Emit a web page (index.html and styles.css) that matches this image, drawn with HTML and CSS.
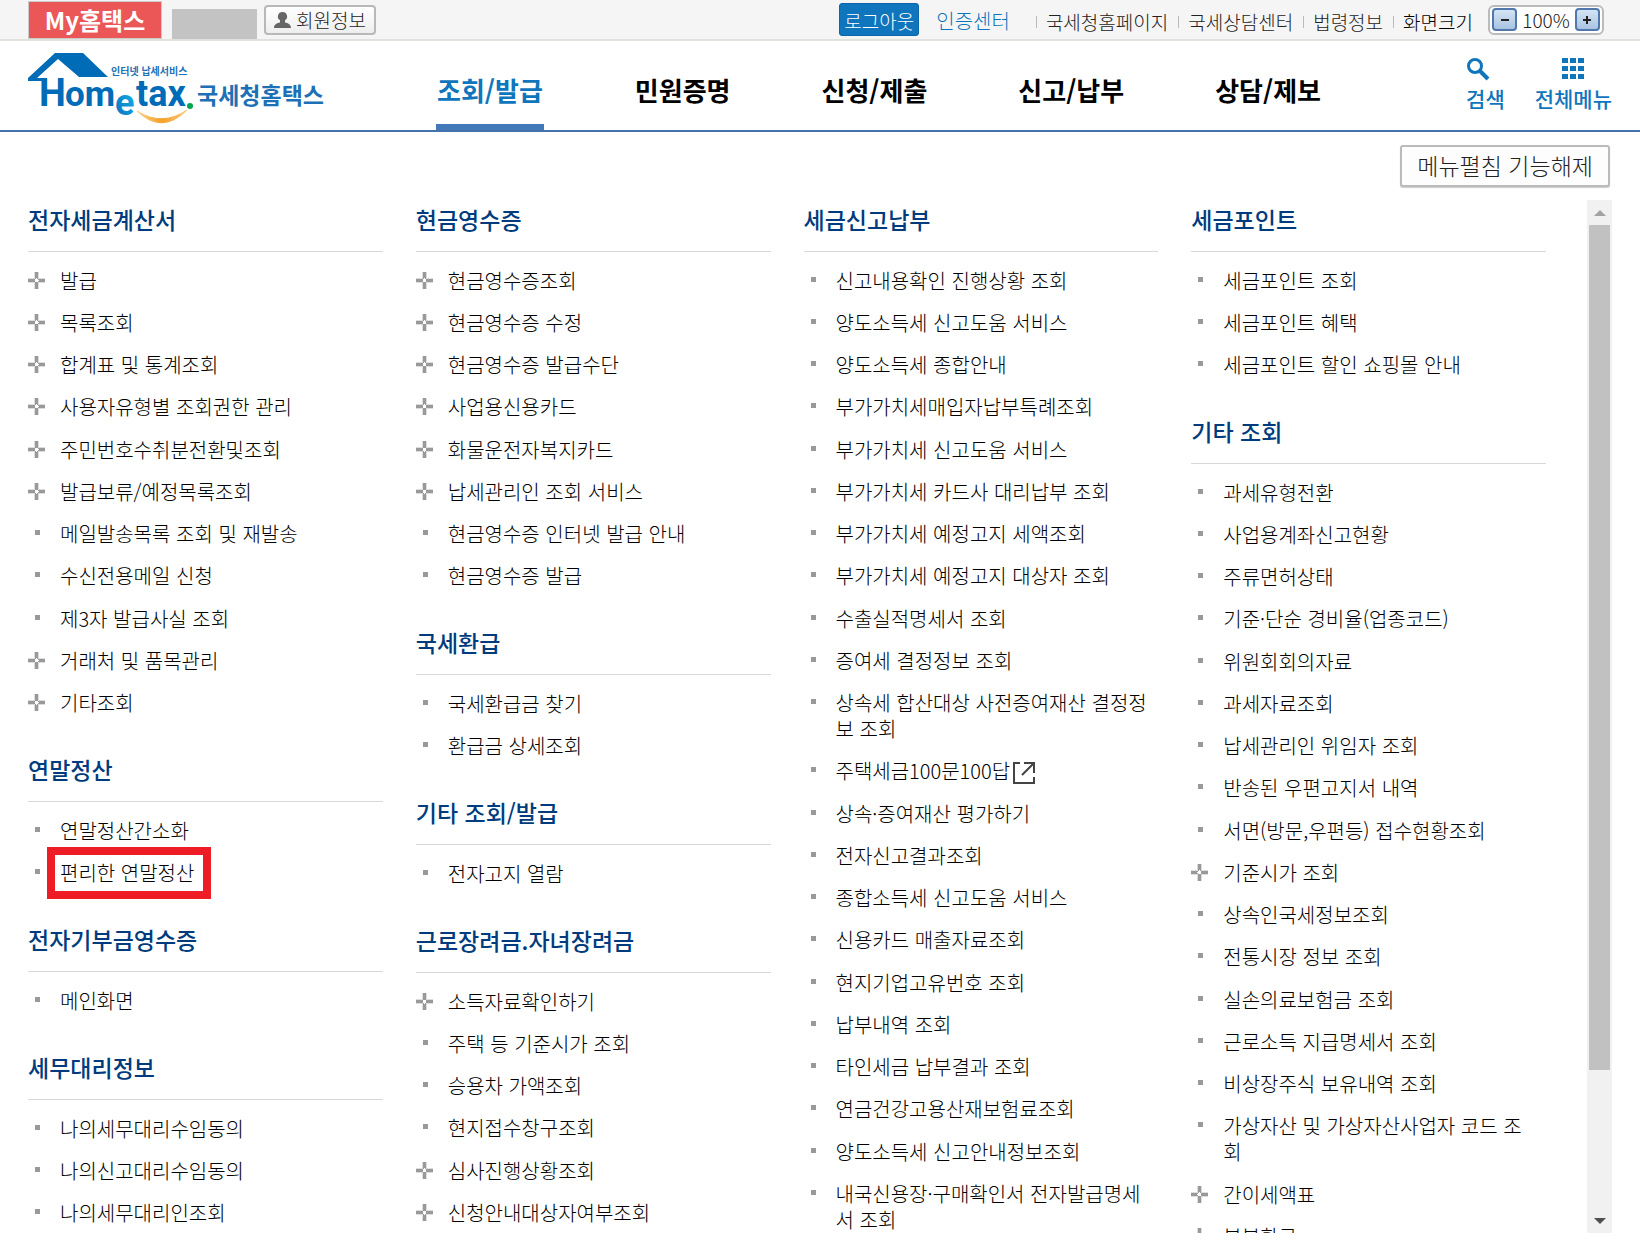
FILE: index.html
```html
<!DOCTYPE html>
<html lang="ko">
  <head>
    <meta charset="utf-8">
    <title>국세청 홈택스</title>
    <link rel="stylesheet" href="styles.css">
  </head>
  <body>
    <div class="topbar">
      <a href="#" class="my-tab">My홈택스</a>
      <span class="user-name"></span>
      <button type="button" class="btn-member">
        <svg width="17" height="18" viewBox="0 0 17 18"><path fill="#666" d="M8.500 1a4.500 4.500 0 0 1 2.500 8.300v2.200c3 .5 6 2 6 5.500H0c0-3.500 3-5 6-5.500V9.300A4.500 4.500 0 0 1 8.500 1z"/></svg>
        회원정보
      </button>
      <div class="util">
        <button type="button" class="btn-logout">로그아웃</button>
        <a href="#" class="cert">인증센터</a>
        <ul class="util-links">
          <li><a href="#">국세청홈페이지</a></li>
          <li><a href="#">국세상담센터</a></li>
          <li><a href="#">법령정보</a></li>
          <li class="strong">화면크기</li>
        </ul>
        <div class="zoom">
          <button type="button" aria-label="축소"><svg width="10" height="10" viewBox="0 0 10 10"><path d="M1 5h8" stroke="#222" stroke-width="2"/></svg></button>
          <span>100%</span>
          <button type="button" aria-label="확대"><svg width="10" height="10" viewBox="0 0 10 10"><path d="M1 5h8M5 1v8" stroke="#222" stroke-width="2"/></svg></button>
        </div>
      </div>
    </div>

    <header class="header">
      <a href="#" class="logo">
        <svg width="296" height="76" viewBox="0 0 296 76">
          <defs>
            <linearGradient id="smile" x1="0" x2="1" y1="0" y2="0">
              <stop offset="0" stop-color="#fbd08a"/>
              <stop offset=".5" stop-color="#f6a02a"/>
              <stop offset="1" stop-color="#fbc878"/>
            </linearGradient>
            <linearGradient id="letter-e" x1="0" x2="1" y1="1" y2="0">
              <stop offset="0" stop-color="#0a6ab8"/>
              <stop offset="1" stop-color="#12b8ee"/>
            </linearGradient>
          </defs>
          <path fill="#006cb8" d="M0 29v-3L27 1h28l25 24H51L30 7 9 26h10v3z"/>
          <text class="logo-en" x="11" y="54" font-size="38">H</text>
          <text class="logo-en" x="37" y="54" font-size="35">om</text>
          <text class="logo-en" x="87" y="63" font-size="36" fill="url(#letter-e)">e</text>
          <text class="logo-en" x="108" y="54" font-size="36">tax</text>
          <circle cx="162" cy="54" r="3" fill="#00a651"/>
          <path d="M109 59q25 24 50-1q-25 17-50 1z" fill="url(#smile)" stroke="url(#smile)"/>
          <text class="logo-ko" x="83" y="23" font-size="10">인터넷 납세서비스</text>
          <text class="logo-ko" x="169" y="52" font-size="23">국세청홈택스</text>
        </svg>
      </a>
      <nav class="gnb">
        <a href="#" class="on">조회/발급</a>
        <a href="#">민원증명</a>
        <a href="#">신청/제출</a>
        <a href="#">신고/납부</a>
        <a href="#">상담/제보</a>
      </nav>
      <div class="tools">
        <a href="#">
          <svg width="24" height="24" viewBox="0 0 24 24" fill="none" stroke="#0f75bc"><circle cx="9" cy="9" r="6.500" stroke-width="3"/><path d="M14 14l8 8" stroke-width="4"/></svg>
          검색
        </a>
        <a href="#" class="all">
          <svg width="24" height="24" viewBox="0 0 24 24" fill="#0f75bc"><path d="M1 1h6v5H1zM9 1h6v5H9zM17 1h6v5h-6zM1 9h6v5H1zM9 9h6v5H9zM17 9h6v5h-6zM1 17h6v5H1zM9 17h6v5H9zM17 17h6v5h-6z"/></svg>
          전체메뉴
        </a>
      </div>
    </header>

    <div class="menu-option">
      <button type="button" class="btn-fold">메뉴펼침 기능해제</button>
    </div>

    <main class="menu">
      <div class="columns">
        <div class="column">
          <section>
            <h3>전자세금계산서</h3>
            <ul>
              <li class="more"><a href="#">발급</a></li>
              <li class="more"><a href="#">목록조회</a></li>
              <li class="more"><a href="#">합계표 및 통계조회</a></li>
              <li class="more"><a href="#">사용자유형별 조회권한 관리</a></li>
              <li class="more"><a href="#">주민번호수취분전환및조회</a></li>
              <li class="more"><a href="#">발급보류/예정목록조회</a></li>
              <li><a href="#">메일발송목록 조회 및 재발송</a></li>
              <li><a href="#">수신전용메일 신청</a></li>
              <li><a href="#">제3자 발급사실 조회</a></li>
              <li class="more"><a href="#">거래처 및 품목관리</a></li>
              <li class="more"><a href="#">기타조회</a></li>
            </ul>
          </section>
          <section>
            <h3>연말정산</h3>
            <ul>
              <li><a href="#">연말정산간소화</a></li>
              <li><a href="#" class="marked">편리한 연말정산</a></li>
            </ul>
          </section>
          <section>
            <h3>전자기부금영수증</h3>
            <ul>
              <li><a href="#">메인화면</a></li>
            </ul>
          </section>
          <section>
            <h3>세무대리정보</h3>
            <ul>
              <li><a href="#">나의세무대리수임동의</a></li>
              <li><a href="#">나의신고대리수임동의</a></li>
              <li><a href="#">나의세무대리인조회</a></li>
            </ul>
          </section>
        </div>

        <div class="column">
          <section>
            <h3>현금영수증</h3>
            <ul>
              <li class="more"><a href="#">현금영수증조회</a></li>
              <li class="more"><a href="#">현금영수증 수정</a></li>
              <li class="more"><a href="#">현금영수증 발급수단</a></li>
              <li class="more"><a href="#">사업용신용카드</a></li>
              <li class="more"><a href="#">화물운전자복지카드</a></li>
              <li class="more"><a href="#">납세관리인 조회 서비스</a></li>
              <li><a href="#">현금영수증 인터넷 발급 안내</a></li>
              <li><a href="#">현금영수증 발급</a></li>
            </ul>
          </section>
          <section>
            <h3>국세환급</h3>
            <ul>
              <li><a href="#">국세환급금 찾기</a></li>
              <li><a href="#">환급금 상세조회</a></li>
            </ul>
          </section>
          <section>
            <h3>기타 조회/발급</h3>
            <ul>
              <li><a href="#">전자고지 열람</a></li>
            </ul>
          </section>
          <section>
            <h3>근로장려금.자녀장려금</h3>
            <ul>
              <li class="more"><a href="#">소득자료확인하기</a></li>
              <li><a href="#">주택 등 기준시가 조회</a></li>
              <li><a href="#">승용차 가액조회</a></li>
              <li><a href="#">현지접수창구조회</a></li>
              <li class="more"><a href="#">심사진행상황조회</a></li>
              <li class="more"><a href="#">신청안내대상자여부조회</a></li>
            </ul>
          </section>
        </div>

        <div class="column">
          <section>
            <h3>세금신고납부</h3>
            <ul>
              <li><a href="#">신고내용확인 진행상황 조회</a></li>
              <li><a href="#">양도소득세 신고도움 서비스</a></li>
              <li><a href="#">양도소득세 종합안내</a></li>
              <li><a href="#">부가가치세매입자납부특례조회</a></li>
              <li><a href="#">부가가치세 신고도움 서비스</a></li>
              <li><a href="#">부가가치세 카드사 대리납부 조회</a></li>
              <li><a href="#">부가가치세 예정고지 세액조회</a></li>
              <li><a href="#">부가가치세 예정고지 대상자 조회</a></li>
              <li><a href="#">수출실적명세서 조회</a></li>
              <li><a href="#">증여세 결정정보 조회</a></li>
              <li><a href="#">상속세 합산대상 사전증여재산 결정정보 조회</a></li>
              <li><a href="#">주택세금100문100답<svg class="blank" width="24" height="22" viewBox="0 0 24 22" fill="none" stroke="#444" stroke-width="2"><path d="M8 1H2v20h20v-6M22 11V1H12M22 1L10 13"/></svg></a></li>
              <li><a href="#">상속·증여재산 평가하기</a></li>
              <li><a href="#">전자신고결과조회</a></li>
              <li><a href="#">종합소득세 신고도움 서비스</a></li>
              <li><a href="#">신용카드 매출자료조회</a></li>
              <li><a href="#">현지기업고유번호 조회</a></li>
              <li><a href="#">납부내역 조회</a></li>
              <li><a href="#">타인세금 납부결과 조회</a></li>
              <li><a href="#">연금건강고용산재보험료조회</a></li>
              <li><a href="#">양도소득세 신고안내정보조회</a></li>
              <li><a href="#">내국신용장·구매확인서 전자발급명세서 조회</a></li>
            </ul>
          </section>
        </div>

        <div class="column">
          <section>
            <h3>세금포인트</h3>
            <ul>
              <li><a href="#">세금포인트 조회</a></li>
              <li><a href="#">세금포인트 혜택</a></li>
              <li><a href="#">세금포인트 할인 쇼핑몰 안내</a></li>
            </ul>
          </section>
          <section>
            <h3>기타 조회</h3>
            <ul>
              <li><a href="#">과세유형전환</a></li>
              <li><a href="#">사업용계좌신고현황</a></li>
              <li><a href="#">주류면허상태</a></li>
              <li><a href="#">기준·단순 경비율(업종코드)</a></li>
              <li><a href="#">위원회회의자료</a></li>
              <li><a href="#">과세자료조회</a></li>
              <li><a href="#">납세관리인 위임자 조회</a></li>
              <li><a href="#">반송된 우편고지서 내역</a></li>
              <li><a href="#">서면(방문,우편등) 접수현황조회</a></li>
              <li class="more"><a href="#">기준시가 조회</a></li>
              <li><a href="#">상속인국세정보조회</a></li>
              <li><a href="#">전통시장 정보 조회</a></li>
              <li><a href="#">실손의료보험금 조회</a></li>
              <li><a href="#">근로소득 지급명세서 조회</a></li>
              <li><a href="#">비상장주식 보유내역 조회</a></li>
              <li><a href="#">가상자산 및 가상자산사업자 코드 조회</a></li>
              <li class="more"><a href="#">간이세액표</a></li>
              <li class="more"><a href="#">부부환급</a></li>
            </ul>
          </section>
        </div>
      </div>

      <div class="scrollbar">
        <span class="arrow up"></span>
        <span class="track"><span class="thumb"></span></span>
        <span class="arrow down"></span>
      </div>
    </main>
  </body>
</html>
```
FILE: styles.css
```css
* {
  margin: 0;
  padding: 0;
  box-sizing: border-box;
}

body {
  display: flex;
  flex-direction: column;
  height: 100vh;
  padding-bottom: 15px;
  overflow: hidden;
  background: #fff;
  color: #222;
  font-family: "Noto Sans CJK KR", sans-serif;
  font-size: 20px;
  font-weight: 300;
  line-height: 26px;
}

ul {
  list-style: none;
}

a {
  color: inherit;
  text-decoration: none;
}

button {
  font: inherit;
  color: inherit;
  cursor: pointer;
}

svg {
  flex: none;
}

/* top bar */
.topbar {
  display: flex;
  flex: none;
  align-items: center;
  height: 41px;
  padding: 0 36px 0 28px;
  border-bottom: 2px solid #e2e2dc;
  background: #f5f5f5;
  font-size: 19px;
}

.my-tab {
  align-self: flex-end;
  width: 134px;
  height: 38px;
  border: 1px solid #ccc;
  background: #eb5757;
  color: #fff;
  font-size: 24px;
  font-weight: 700;
  line-height: 36px;
  text-align: center;
}

.user-name {
  align-self: flex-end;
  width: 85px;
  height: 30px;
  margin: 0 7px 0 10px;
  background: #c3c3c3;
}

.btn-member {
  display: flex;
  align-items: center;
  gap: 5px;
  height: 30px;
  padding: 0 8px;
  border: 2px solid #b8b8b8;
  border-radius: 4px;
  background: linear-gradient(#fff, #eee);
}

.util {
  display: flex;
  align-items: center;
  margin-left: auto;
}

.btn-logout {
  height: 33px;
  padding: 2px 4px 0;
  border: 1px solid #0a66a8;
  border-radius: 3px;
  background: #0f75bc;
  color: #fff;
}

.cert {
  margin: 0 26px 0 17px;
  padding-top: 3px;
  color: #0f75bc;
  font-size: 20px;
}

.util-links {
  display: flex;
  padding-top: 4px;
}

.util-links li {
  display: flex;
  align-items: center;
  margin-right: 10px;
}

.util-links li::before {
  content: "";
  width: 1px;
  height: 12px;
  margin-right: 9px;
  background: #bbb;
}

.util-links .strong {
  margin-right: 15px;
  color: #000;
}

.zoom {
  display: flex;
  align-items: center;
  justify-content: space-between;
  width: 116px;
  height: 30px;
  padding: 0 2px;
  border: 2px solid #bbb;
  border-radius: 6px;
  background: #fff;
}

.zoom button {
  display: flex;
  align-items: center;
  justify-content: center;
  width: 25px;
  height: 23px;
  border: 2px solid #5078ac;
  border-radius: 4px;
  background: linear-gradient(#d4e4f4, #a8c4e2);
}

/* header */
.header {
  display: flex;
  flex: none;
  height: 91px;
  padding: 0 28px;
  border-bottom: 2px solid #4472aa;
}

.logo {
  padding-top: 11px;
}

.logo-en {
  fill: #006cb8;
  font-family: Roboto, sans-serif;
  font-weight: 700;
}

.logo-en[fill] {
  fill: url(#letter-e);
}

.logo-ko {
  fill: #1d70b5;
  font-weight: 700;
}

.gnb {
  display: flex;
  gap: 91px;
  margin-left: 112px;
  color: #000;
  font-size: 26px;
  font-weight: 700;
}

.gnb a {
  height: 89px;
  line-height: 98px;
  white-space: nowrap;
}

.gnb .on {
  padding: 0 1px;
  border-bottom: 6px solid #4479b9;
  color: #0f75bc;
}

.tools {
  display: flex;
  gap: 30px;
  margin-left: auto;
  padding-top: 16px;
  color: #0f75bc;
  font-size: 21px;
  font-weight: 500;
}

.tools a {
  display: flex;
  flex-direction: column;
  gap: 4px;
}

.tools .all {
  align-items: center;
}

.menu-option {
  display: flex;
  flex: none;
  justify-content: flex-end;
  height: 68px;
  padding: 13px 30px 0;
}

.btn-fold {
  height: 42px;
  padding: 0 15px 3px;
  border: 2px solid #bbb;
  border-radius: 3px;
  background: #fdfdfd;
  box-shadow: 0 1px 1px #ccc;
  font-size: 23px;
}

/* full menu */
.menu {
  display: flex;
  flex: 1;
  gap: 41px;
  min-height: 0;
  padding: 0 28px;
}

.columns {
  display: grid;
  flex: 1;
  grid-template-columns: repeat(4, 1fr);
  gap: 33px;
  padding-top: 2px;
  overflow: hidden;
  color: #000;
}

.column section {
  margin-bottom: 36px;
}

.column h3 {
  padding-bottom: 15px;
  border-bottom: 1px solid #d8d8d8;
  color: #003c7d;
  font-size: 23px;
  font-weight: 500;
  line-height: 34px;
}

.column ul {
  padding-top: 16px;
}

.column li {
  position: relative;
  margin-bottom: 16px;
  padding: 0 11px 0 32px;
}

.column li:nth-child(4n) {
  margin-bottom: 17px;
}

.column li::before {
  content: "";
  position: absolute;
  top: 9px;
  left: 7px;
  width: 5px;
  height: 5px;
  background: #999;
}

.column .more::before {
  top: 4px;
  left: 0;
  width: 17px;
  height: 17px;
  background:
    radial-gradient(#fff 2px, transparent 2px),
    linear-gradient(#999, #999) center / 17px 3px no-repeat,
    linear-gradient(#999, #999) center / 3px 17px no-repeat,
    linear-gradient(#ddd, #ddd) center / 17px 5px no-repeat,
    linear-gradient(#ddd, #ddd) center / 5px 17px no-repeat;
}

.column .marked {
  display: inline-block;
  padding-right: 4px;
  outline: 8px solid #ee1c24;
  outline-offset: 5px;
}

.blank {
  margin-left: 2px;
  vertical-align: -5px;
}

.scrollbar {
  display: flex;
  flex-direction: column;
  width: 25px;
  background: #f1f1f1;
}

.arrow {
  display: flex;
  align-items: center;
  justify-content: center;
  height: 25px;
}

.arrow::before {
  content: "";
  border: 6px solid transparent;
}

.up::before {
  border-top: 0;
  border-bottom-color: #a3a3a3;
}

.down::before {
  border-bottom: 0;
  border-top-color: #505050;
}

.track {
  flex: 1;
  padding: 0 2px;
}

.thumb {
  display: block;
  height: 86%;
  background: #c1c1c1;
}
```
